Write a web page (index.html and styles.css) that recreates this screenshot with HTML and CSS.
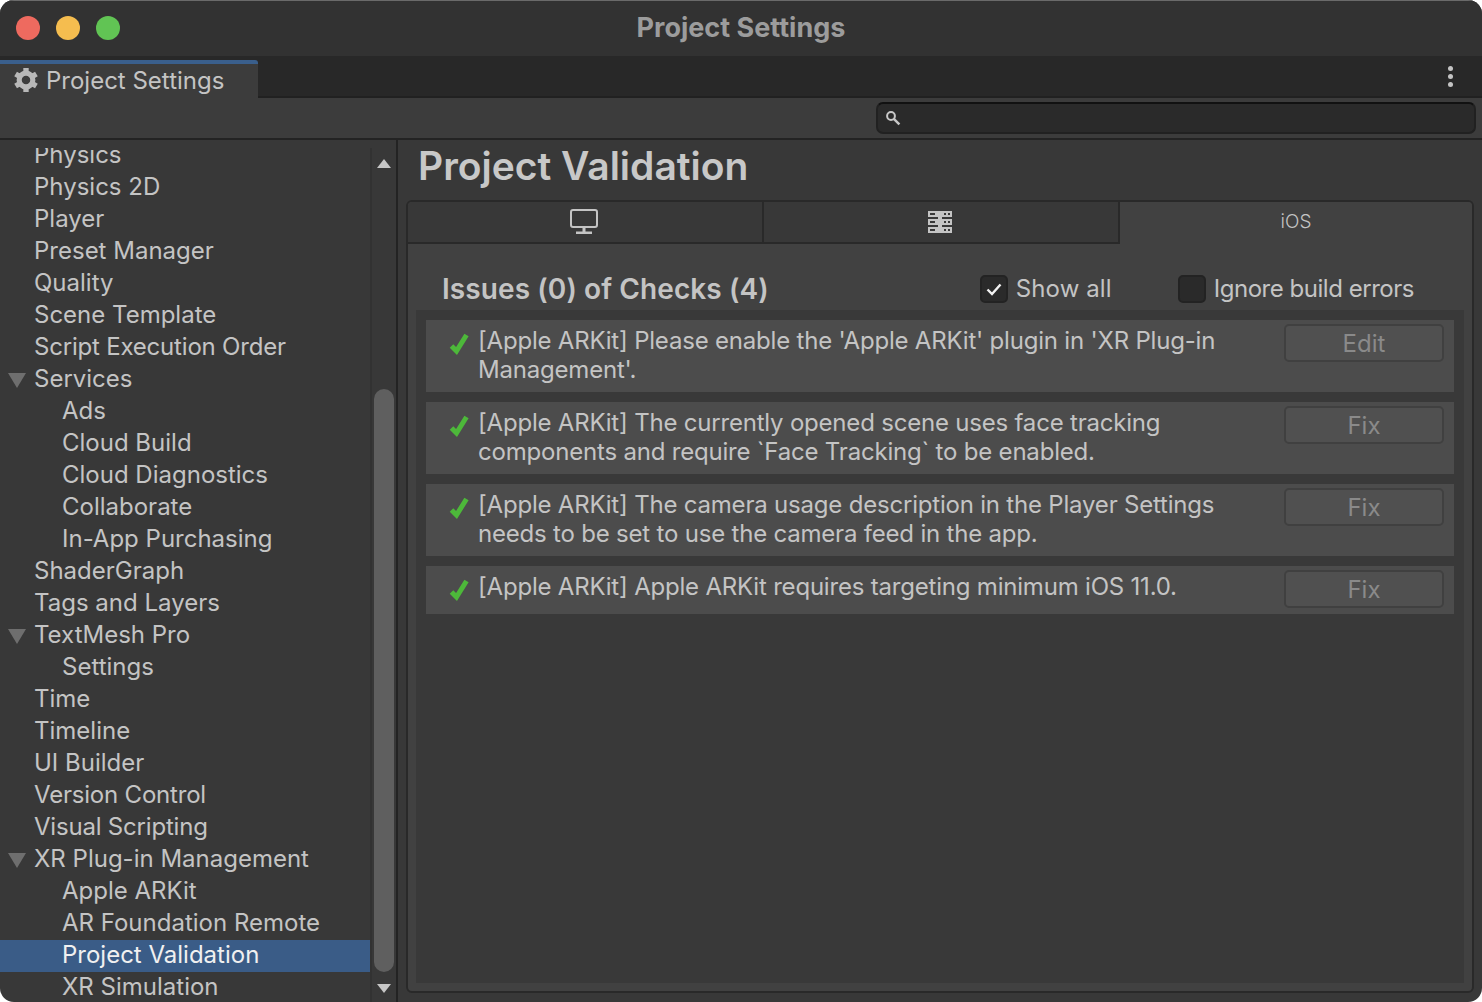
FILE: index.html
```html
<!DOCTYPE html>
<html lang="en">
<head>
<meta charset="utf-8">
<title>Project Settings</title>
<link rel="stylesheet" href="styles.css">
</head>
<body>
<div class="window">
  <header class="titlebar">
    <div class="traffic">
      <span class="light red"></span><span class="light yellow"></span><span class="light green"></span>
    </div>
    <div class="window-title">Project Settings</div>
  </header>
  <div class="tabstrip">
    <div class="doc-tab">
      <svg class="gear" viewBox="0.4 0.4 23.2 23.2" width="24" height="24">
        <circle cx="12" cy="12" r="6.6" fill="none" stroke="#b8b8b8" stroke-width="5"/>
        <g fill="#b8b8b8">
          <rect x="9.4" y="0.4" width="5.2" height="5"/>
          <rect x="9.4" y="0.4" width="5.2" height="5" transform="rotate(60 12 12)"/>
          <rect x="9.4" y="0.4" width="5.2" height="5" transform="rotate(120 12 12)"/>
          <rect x="9.4" y="0.4" width="5.2" height="5" transform="rotate(180 12 12)"/>
          <rect x="9.4" y="0.4" width="5.2" height="5" transform="rotate(240 12 12)"/>
          <rect x="9.4" y="0.4" width="5.2" height="5" transform="rotate(300 12 12)"/>
        </g>
      </svg>
      <span>Project Settings</span>
    </div>
    <div class="kebab"><i></i><i></i><i></i></div>
  </div>
  <div class="toolbar">
    <div class="search">
      <svg viewBox="0 0 16 16" width="16" height="16">
        <circle cx="6" cy="6" r="3.9" fill="none" stroke="#c8c8c8" stroke-width="2"/>
        <path d="M8.8 8.8 L14.4 14.4" stroke="#c8c8c8" stroke-width="2.4" fill="none"/>
      </svg>
    </div>
  </div>
  <main class="main">
    <aside class="sidebar">
      <nav class="tree">
        <div class="row first">Physics</div>
        <div class="row">Physics 2D</div>
        <div class="row">Player</div>
        <div class="row">Preset Manager</div>
        <div class="row">Quality</div>
        <div class="row">Scene Template</div>
        <div class="row tight">Script Execution Order</div>
        <div class="row open">Services</div>
        <div class="row child">Ads</div>
        <div class="row child">Cloud Build</div>
        <div class="row child">Cloud Diagnostics</div>
        <div class="row child">Collaborate</div>
        <div class="row child">In-App Purchasing</div>
        <div class="row">ShaderGraph</div>
        <div class="row">Tags and Layers</div>
        <div class="row open">TextMesh Pro</div>
        <div class="row child">Settings</div>
        <div class="row">Time</div>
        <div class="row">Timeline</div>
        <div class="row">UI Builder</div>
        <div class="row tight">Version Control</div>
        <div class="row tight">Visual Scripting</div>
        <div class="row open">XR Plug-in Management</div>
        <div class="row child">Apple ARKit</div>
        <div class="row child">AR Foundation Remote</div>
        <div class="row child selected">Project Validation</div>
        <div class="row child">XR Simulation</div>
      </nav>
      <div class="scrollbar">
        <span class="arrow up"></span>
        <span class="thumb"></span>
        <span class="arrow down"></span>
      </div>
    </aside>
    <section class="content">
      <h1 class="page-title">Project Validation</h1>
      <div class="frame">
        <div class="tabs">
          <div class="tab">
            <svg viewBox="0 0 28 26" width="28" height="26">
              <rect x="1" y="1" width="26" height="17" rx="2" fill="none" stroke="#c4c4c4" stroke-width="2"/>
              <rect x="12.5" y="18" width="3" height="5" fill="#c4c4c4"/>
              <rect x="6" y="22.5" width="16" height="2.5" fill="#c4c4c4"/>
            </svg>
          </div>
          <div class="tab">
            <svg viewBox="0 0 24 22" width="24" height="22">
              <path fill="#c4c4c4" fill-rule="evenodd" d="M0 0H24V6H14V8H24V14H14V16H24V22H0V16H10V14H0V8H10V6H0Z M2 2V4H7V2Z M16 2V4H18V2Z M20 2V4H22V2Z M2 10V12H7V10Z M16 10V12H18V10Z M20 10V12H22V10Z M2 18V20H7V18Z M16 18V20H18V18Z M20 18V20H22V18Z"/>
            </svg>
          </div>
          <div class="tab active">iOS</div>
        </div>
        <div class="issues-head">
          <h2 class="issues-title">Issues (0) of Checks (4)</h2>
          <div class="options">
            <label class="option">
              <span class="box">
                <svg viewBox="0 0 20 20" width="20" height="20"><path d="M3.5 10.5 L8 15 L16.5 5.5" fill="none" stroke="#f2f2f2" stroke-width="2.4"/></svg>
              </span>
              <span class="wide">Show all</span>
            </label>
            <label class="option">
              <span class="box"></span>
              <span class="narrow">Ignore build errors</span>
            </label>
          </div>
        </div>
        <div class="panel">
          <div class="issue">
            <svg class="tick" viewBox="0 0 22 24" width="22" height="24"><path d="M3.5 15 L8.5 20 L18.5 4" fill="none" stroke="#4db83a" stroke-width="5"/></svg>
            <p class="issue-text">[Apple ARKit] Please enable the 'Apple ARKit' plugin in 'XR Plug-in Management'.</p>
            <button class="action" type="button">Edit</button>
          </div>
          <div class="issue">
            <svg class="tick" viewBox="0 0 22 24" width="22" height="24"><path d="M3.5 15 L8.5 20 L18.5 4" fill="none" stroke="#4db83a" stroke-width="5"/></svg>
            <p class="issue-text">[Apple ARKit] The currently opened scene uses face tracking components and require `Face Tracking` to be enabled.</p>
            <button class="action" type="button">Fix</button>
          </div>
          <div class="issue">
            <svg class="tick" viewBox="0 0 22 24" width="22" height="24"><path d="M3.5 15 L8.5 20 L18.5 4" fill="none" stroke="#4db83a" stroke-width="5"/></svg>
            <p class="issue-text">[Apple ARKit] The camera usage description in the Player Settings needs to be set to use the camera feed in the app.</p>
            <button class="action" type="button">Fix</button>
          </div>
          <div class="issue">
            <svg class="tick" viewBox="0 0 22 24" width="22" height="24"><path d="M3.5 15 L8.5 20 L18.5 4" fill="none" stroke="#4db83a" stroke-width="5"/></svg>
            <p class="issue-text">[Apple ARKit] Apple ARKit requires targeting minimum iOS 11.0.</p>
            <button class="action" type="button">Fix</button>
          </div>
        </div>
      </div>
    </section>
  </main>
</div>
</body>
</html>
```

FILE: styles.css
```css
* { box-sizing: border-box; }
html, body { margin: 0; height: 100%; background: #fff; overflow: hidden; }
body { font-family: Inter, "Noto Sans", sans-serif; color: #c4c4c4; font-size: 24px; }

.window {
  width: 1482px;
  height: 1002px;
  display: flex;
  flex-direction: column;
  border-radius: 14px;
  overflow: hidden;
  background: #383838;
}

.titlebar {
  height: 56px;
  flex: none;
  background: #323232;
  box-shadow: inset 0 1px 0 #6a6a6a;
  display: grid;
  grid-template-columns: 1fr auto 1fr;
  align-items: center;
  padding: 0 16px;
}
.traffic { display: flex; gap: 16px; }
.light { width: 24px; height: 24px; border-radius: 50%; }
.red { background: #ee6a5f; }
.yellow { background: #f5bd4f; }
.green { background: #61c454; }
.window-title { font-size: 27px; font-weight: 700; color: #9c9c9c; padding-bottom: 2px; }

.tabstrip {
  height: 42px;
  flex: none;
  background: #282828;
  border-bottom: 2px solid #212121;
  display: flex;
  justify-content: space-between;
}
.doc-tab {
  width: 258px;
  height: 42px;
  margin-top: 4px;
  border-top: 4px solid #3a5f8c;
  border-top-right-radius: 3px;
  background: #3c3c3c;
  display: flex;
  align-items: center;
  gap: 8px;
  padding: 0 0 6px 14px;
}
.gear { flex: none; }
.kebab {
  width: 64px;
  display: flex;
  flex-direction: column;
  align-items: center;
  justify-content: center;
  gap: 3px;
}
.kebab i { width: 5px; height: 5px; border-radius: 50%; background: #c4c4c4; }

.toolbar {
  height: 42px;
  flex: none;
  background: #3c3c3c;
  border-bottom: 2px solid #232323;
  display: flex;
  justify-content: flex-end;
  padding: 4px 6px 0 0;
}
.search {
  width: 600px;
  height: 32px;
  background: #2a2a2a;
  border: 2px solid #212121;
  border-top-color: #111;
  border-radius: 7px;
  display: flex;
  align-items: center;
  padding-left: 7px;
}

.main { flex: 1; min-height: 0; display: flex; }

.sidebar {
  width: 398px;
  flex: none;
  display: flex;
  border-right: 2px solid #232323;
}
.tree { width: 370px; flex: none; margin-top: 8px; overflow: hidden; }
.row { height: 32px; line-height: 30px; padding-left: 34px; white-space: nowrap; position: relative; }
.row.first { margin-top: -8px; }
.row.child { padding-left: 62px; }
.row.tight { letter-spacing: -0.2px; }
.row.selected { background: #3a5c87; color: #f0f0f0; }
.row.open::before {
  content: "";
  position: absolute;
  left: 8px;
  top: 9px;
  width: 18px;
  height: 15px;
  background: #6e6e6e;
  clip-path: polygon(0 0, 100% 0, 50% 100%);
}

.scrollbar {
  flex: 1;
  margin-top: 8px;
  border-left: 2px solid #323232;
  padding: 11px 2px 0;
  display: flex;
  flex-direction: column;
  align-items: center;
}
.arrow { width: 14px; height: 9px; flex: none; background: #c6c6c6; }
.arrow.up { clip-path: polygon(50% 0, 100% 100%, 0 100%); }
.arrow.down { clip-path: polygon(0 0, 100% 0, 50% 100%); margin-top: 12px; }
.thumb { width: 20px; height: 583px; margin-top: 221px; flex: none; border-radius: 10px; background: #5f5f5f; }

.content {
  flex: 1;
  min-width: 0;
  display: flex;
  flex-direction: column;
  padding: 0 8px 9px 8px;
}
.page-title {
  margin: 0;
  height: 60px;
  line-height: 52px;
  flex: none;
  padding-left: 12px;
  font-size: 39px;
  font-weight: 600;
  color: #c8c8c8;
}
.frame {
  flex: 1;
  min-height: 0;
  border: 2px solid #292929;
  border-radius: 6px;
  background: #414141;
  display: flex;
  flex-direction: column;
  overflow: hidden;
}
.tabs { height: 42px; flex: none; display: grid; grid-template-columns: 356px 356px 1fr; }
.tab {
  background: #383838;
  border-bottom: 2px solid #292929;
  border-right: 2px solid #292929;
  display: flex;
  align-items: center;
  justify-content: center;
  padding-right: 2px;
}
.tab.active {
  background: #414141;
  border: 0;
  font-size: 19px;
  font-weight: 300;
  padding: 0 0 4px;
}

.issues-head {
  height: 66px;
  flex: none;
  display: flex;
  justify-content: space-between;
  align-items: center;
  padding: 23px 58px 0 34px;
}
.issues-title { margin: 0; font-size: 28px; font-weight: 600; letter-spacing: 0.09px; color: #c4c4c4; }
.options { display: flex; gap: 66px; }
.option { display: flex; align-items: center; gap: 8px; }
.wide { letter-spacing: 0.12px; }
.narrow { letter-spacing: -0.47px; }
.box {
  width: 28px;
  height: 28px;
  background: #2a2a2a;
  border: 2px solid #232323;
  border-radius: 5px;
  display: flex;
  align-items: center;
  justify-content: center;
}

.panel {
  flex: 1;
  min-height: 0;
  margin: 0 8px 8px;
  padding: 10px;
  background: #393939;
  display: flex;
  flex-direction: column;
  gap: 10px;
}
.issue {
  background: #4c4c4c;
  display: flex;
  align-items: flex-start;
  padding: 4px 10px 6px 22px;
}
.tick { flex: none; margin: 7px 8px 0 0; }
.issue-text {
  margin: 2px 0 2px;
  width: 790px;
  flex: none;
  line-height: 29px;
  letter-spacing: -0.2px;
  color: #c4c4c4;
}
.action {
  margin-left: auto;
  width: 160px;
  height: 38px;
  background: #505050;
  border: 2px solid #404040;
  border-radius: 5px;
  color: #8a8a8a;
  font: inherit;
  padding: 0;
}
```
